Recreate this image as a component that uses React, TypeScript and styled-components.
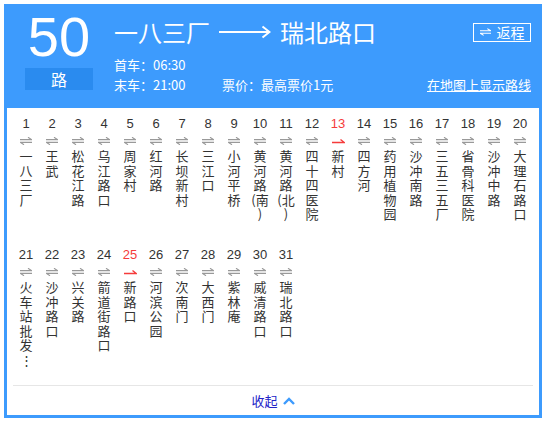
import { Fragment } from 'react';
import styled, { createGlobalStyle } from 'styled-components';

const GlobalStyle = createGlobalStyle`
  body {
    margin: 0;
    background: #fff;
    font-family: "Noto Sans CJK SC", "Liberation Sans", sans-serif;
  }
`;

const BLUE = '#3d9bfd';

type Stop = { name: string; here?: boolean };

const stops: Stop[] = [
  { name: '一八三厂' },
  { name: '王武' },
  { name: '松花江路' },
  { name: '乌江路口' },
  { name: '周家村' },
  { name: '红河路' },
  { name: '长坝新村' },
  { name: '三江口' },
  { name: '小河平桥' },
  { name: '黄河路(南)' },
  { name: '黄河路(北)' },
  { name: '四十四医院' },
  { name: '新村', here: true },
  { name: '四方河' },
  { name: '药用植物园' },
  { name: '沙冲南路' },
  { name: '三五三五厂' },
  { name: '省骨科医院' },
  { name: '沙冲中路' },
  { name: '大理石路口' },
  { name: '火车站批发⋮' },
  { name: '沙冲路口' },
  { name: '兴关路' },
  { name: '箭道街路口' },
  { name: '新路口', here: true },
  { name: '河滨公园' },
  { name: '次南门' },
  { name: '大西门' },
  { name: '紫林庵' },
  { name: '威清路口' },
  { name: '瑞北路口' },
];

// one char per line, but an opening bracket stays with the next char
const splitName = (name: string) => {
  const lines: string[] = [];
  const chars = Array.from(name);
  for (let i = 0; i < chars.length; i++) {
    if (chars[i] === '(' && i + 1 < chars.length) {
      lines.push(chars[i] + chars[i + 1]);
      i++;
    } else {
      lines.push(chars[i]);
    }
  }
  return lines;
};

const Card = styled.div`
  margin: 4px;
  width: 538px;
`;

const Header = styled.div`
  box-sizing: border-box;
  height: 104px;
  background: ${BLUE};
  color: #fff;
  display: flex;
  gap: 21px;
  padding: 5px 11px 0 21px;
`;

const Badge = styled.div`
  width: 68px;
  display: flex;
  flex-direction: column;
`;

const LineNo = styled.div`
  font-family: "Liberation Sans", Arial, sans-serif;
  font-size: 56px;
  line-height: 56px;
  text-align: center;
`;

const LineTag = styled.div`
  margin-top: 3px;
  height: 22px;
  background: #2a8bef;
  font-size: 16px;
  line-height: 22px;
  text-align: center;
`;

const Info = styled.div`
  flex: 1;
  display: flex;
  flex-direction: column;
  padding-top: 7px;
`;

const TitleRow = styled.div`
  height: 32px;
  display: flex;
  align-items: center;
  justify-content: space-between;
`;

const Title = styled.div`
  display: flex;
  align-items: center;
  gap: 9px;
  font-size: 24px;
  line-height: 32px;
`;

const BackButton = styled.div`
  box-sizing: border-box;
  width: 58px;
  height: 19px;
  border: 1px solid #fff;
  display: flex;
  align-items: center;
  justify-content: center;
  gap: 6px;
  font-size: 14px;
  line-height: 17px;
`;

const Meta = styled.div`
  margin-top: 7px;
  display: flex;
  flex-direction: column;
  font-size: 13px;
  line-height: 20px;
`;

const MetaRow = styled.div`
  display: flex;
`;

const MetaCell = styled.span`
  width: 108px;
`;

const MapLink = styled.a`
  margin-left: auto;
  color: #fff;
  text-decoration: underline;
  cursor: pointer;
`;

const Body = styled.div`
  border: 3px solid ${BLUE};
  border-top: 0;
  padding: 8px 6px 0;
`;

const StopGrid = styled.div`
  display: grid;
  grid-template-columns: repeat(20, 26px);
  grid-auto-rows: 131px;
`;

const StopItem = styled.div`
  display: flex;
  flex-direction: column;
  align-items: center;
`;

const StopNo = styled.div<{ $here?: boolean }>`
  font-family: "Liberation Sans", Arial, sans-serif;
  font-size: 13px;
  line-height: 16px;
  color: ${p => (p.$here ? '#f53b3b' : '#333')};
`;

const StopArrow = styled.div`
  height: 17px;
  display: flex;
  align-items: center;
  justify-content: center;
`;

const StopName = styled.div`
  width: 20px;
  font-size: 13px;
  line-height: 14.5px;
  color: #333;
  text-align: center;
  white-space: nowrap;
`;

const Divider = styled.div`
  margin: 7px 0 0;
  border-top: 1px solid #e6e6e6;
`;

const Toggle = styled.div`
  height: 29px;
  display: flex;
  align-items: center;
  justify-content: center;
  gap: 5px;
  font-size: 13px;
  color: #2323c8;
  cursor: pointer;
`;

const SwapIcon = ({ color, width = 12 }: { color: string; width?: number }) => (
  <svg width={width} height="8" viewBox="0 0 12 8" fill="none" stroke={color} strokeWidth="1.2">
    <path d="M0 2.6H11.5L8 0.3" />
    <path d="M12 5.4H0.5L4 7.7" />
  </svg>
);

const HereArrow = () => (
  <svg width="13" height="8" viewBox="0 0 13 8" fill="none" stroke="#f53b3b" strokeWidth="1.4">
    <path d="M0 5.5H12.3L8.5 2.5" />
  </svg>
);

const LongArrow = () => (
  <svg width="52" height="14" viewBox="0 0 52 14" fill="none" stroke="#fff" strokeWidth="2">
    <path d="M0 7H50" />
    <path d="M43.5 1.5L50.5 7L43.5 12.5" />
  </svg>
);

const Chevron = () => (
  <svg width="12" height="8" viewBox="0 0 12 8" fill="none" stroke={BLUE} strokeWidth="2.4">
    <path d="M1 7L6 2L11 7" />
  </svg>
);

export default function App() {
  return (
    <>
      <GlobalStyle />
      <Card>
        <Header>
          <Badge>
            <LineNo>50</LineNo>
            <LineTag>路</LineTag>
          </Badge>
          <Info>
            <TitleRow>
              <Title>
                <span>一八三厂</span>
                <LongArrow />
                <span>瑞北路口</span>
              </Title>
              <BackButton>
                <SwapIcon color="#fff" width={11} />
                <span>返程</span>
              </BackButton>
            </TitleRow>
            <Meta>
              <MetaRow>首车：06:30</MetaRow>
              <MetaRow>
                <MetaCell>末车：21:00</MetaCell>
                <span>票价：最高票价1元</span>
                <MapLink>在地图上显示路线</MapLink>
              </MetaRow>
            </Meta>
          </Info>
        </Header>
        <Body>
          <StopGrid>
            {stops.map((s, i) => (
              <StopItem key={i}>
                <StopNo $here={s.here}>{i + 1}</StopNo>
                <StopArrow>{s.here ? <HereArrow /> : <SwapIcon color="#999" />}</StopArrow>
                <StopName>
                  {splitName(s.name).map((line, j) => (
                    <Fragment key={j}>
                      {j > 0 && <br />}
                      {line}
                    </Fragment>
                  ))}
                </StopName>
              </StopItem>
            ))}
          </StopGrid>
          <Divider />
          <Toggle>
            <span>收起</span>
            <Chevron />
          </Toggle>
        </Body>
      </Card>
    </>
  );
}
